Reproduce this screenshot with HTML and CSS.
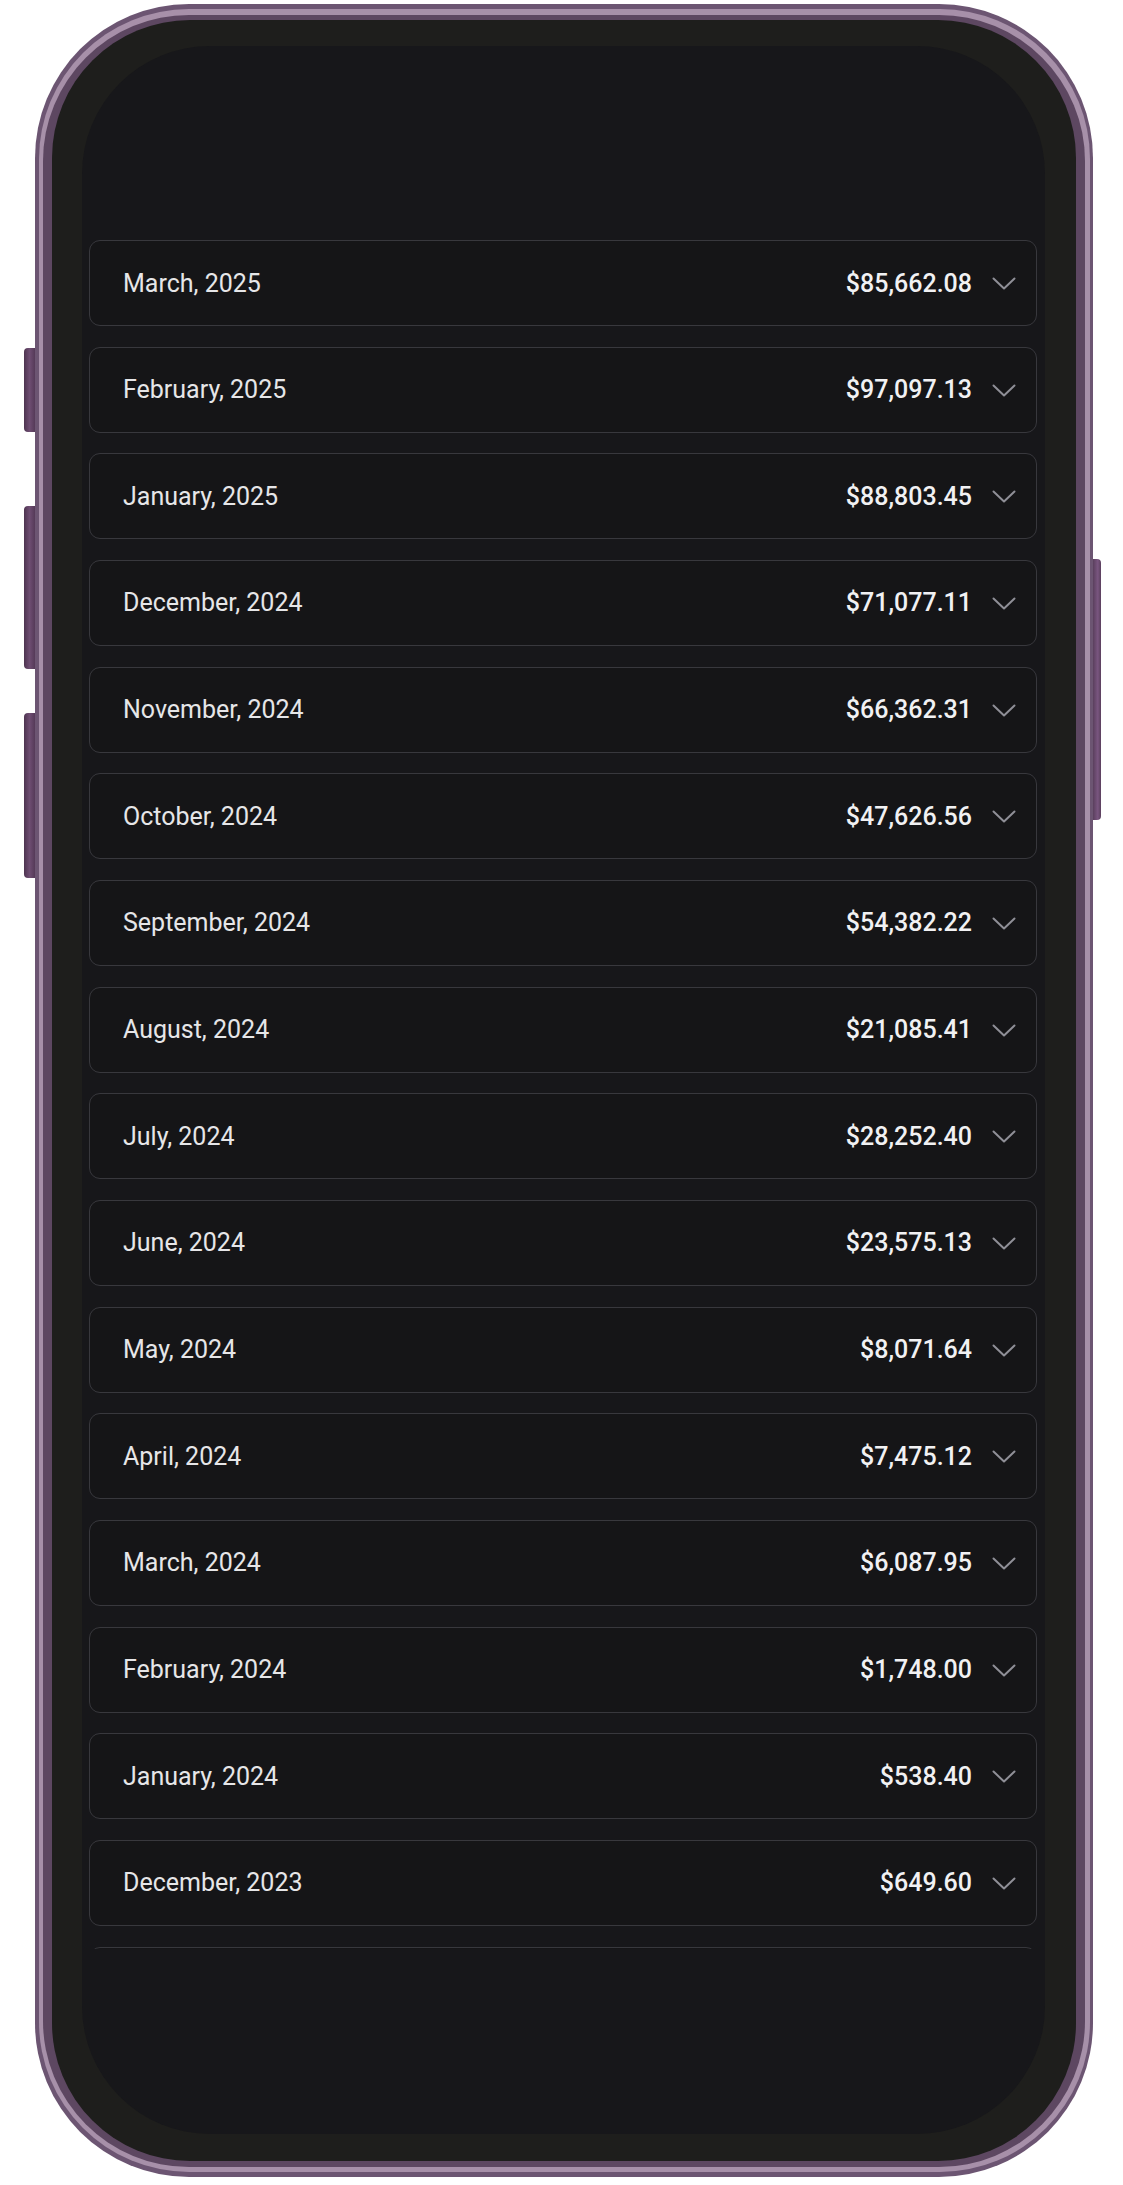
FILE: index.html
```html
<!DOCTYPE html>
<html lang="en">
<head>
<meta charset="utf-8">
<title>Monthly totals</title>
<link rel="stylesheet" href="styles.css">
</head>
<body>
<div class="phone">
  <div class="btn btn-l1"></div>
  <div class="btn btn-l2"></div>
  <div class="btn btn-l3"></div>
  <div class="btn btn-r1"></div>
  <div class="band-light">
    <div class="band-dark">
      <div class="bezel">
        <div class="screen">
          <div class="list">
            <div class="card"><span class="month">March, 2025</span><span class="amount">$85,662.08</span><svg class="chev" viewBox="0 0 24 13"><path d="M1.5 1.5 L12 11.5 L22.5 1.5"/></svg></div>
            <div class="card"><span class="month">February, 2025</span><span class="amount">$97,097.13</span><svg class="chev" viewBox="0 0 24 13"><path d="M1.5 1.5 L12 11.5 L22.5 1.5"/></svg></div>
            <div class="card"><span class="month">January, 2025</span><span class="amount">$88,803.45</span><svg class="chev" viewBox="0 0 24 13"><path d="M1.5 1.5 L12 11.5 L22.5 1.5"/></svg></div>
            <div class="card"><span class="month">December, 2024</span><span class="amount">$71,077.11</span><svg class="chev" viewBox="0 0 24 13"><path d="M1.5 1.5 L12 11.5 L22.5 1.5"/></svg></div>
            <div class="card"><span class="month">November, 2024</span><span class="amount">$66,362.31</span><svg class="chev" viewBox="0 0 24 13"><path d="M1.5 1.5 L12 11.5 L22.5 1.5"/></svg></div>
            <div class="card"><span class="month">October, 2024</span><span class="amount">$47,626.56</span><svg class="chev" viewBox="0 0 24 13"><path d="M1.5 1.5 L12 11.5 L22.5 1.5"/></svg></div>
            <div class="card"><span class="month">September, 2024</span><span class="amount">$54,382.22</span><svg class="chev" viewBox="0 0 24 13"><path d="M1.5 1.5 L12 11.5 L22.5 1.5"/></svg></div>
            <div class="card"><span class="month">August, 2024</span><span class="amount">$21,085.41</span><svg class="chev" viewBox="0 0 24 13"><path d="M1.5 1.5 L12 11.5 L22.5 1.5"/></svg></div>
            <div class="card"><span class="month">July, 2024</span><span class="amount">$28,252.40</span><svg class="chev" viewBox="0 0 24 13"><path d="M1.5 1.5 L12 11.5 L22.5 1.5"/></svg></div>
            <div class="card"><span class="month">June, 2024</span><span class="amount">$23,575.13</span><svg class="chev" viewBox="0 0 24 13"><path d="M1.5 1.5 L12 11.5 L22.5 1.5"/></svg></div>
            <div class="card"><span class="month">May, 2024</span><span class="amount">$8,071.64</span><svg class="chev" viewBox="0 0 24 13"><path d="M1.5 1.5 L12 11.5 L22.5 1.5"/></svg></div>
            <div class="card"><span class="month">April, 2024</span><span class="amount">$7,475.12</span><svg class="chev" viewBox="0 0 24 13"><path d="M1.5 1.5 L12 11.5 L22.5 1.5"/></svg></div>
            <div class="card"><span class="month">March, 2024</span><span class="amount">$6,087.95</span><svg class="chev" viewBox="0 0 24 13"><path d="M1.5 1.5 L12 11.5 L22.5 1.5"/></svg></div>
            <div class="card"><span class="month">February, 2024</span><span class="amount">$1,748.00</span><svg class="chev" viewBox="0 0 24 13"><path d="M1.5 1.5 L12 11.5 L22.5 1.5"/></svg></div>
            <div class="card"><span class="month">January, 2024</span><span class="amount">$538.40</span><svg class="chev" viewBox="0 0 24 13"><path d="M1.5 1.5 L12 11.5 L22.5 1.5"/></svg></div>
            <div class="card"><span class="month">December, 2023</span><span class="amount">$649.60</span><svg class="chev" viewBox="0 0 24 13"><path d="M1.5 1.5 L12 11.5 L22.5 1.5"/></svg></div>
            <div class="card card-peek"></div>
          </div>
        </div>
      </div>
    </div>
  </div>
</div>
</body>
</html>
```

FILE: styles.css
```css
html, body {
  margin: 0;
  padding: 0;
  background: #ffffff;
}

body {
  font-family: Roboto, "Liberation Sans", Arial, sans-serif;
}

.phone {
  position: relative;
  box-sizing: border-box;
  width: 1058px;
  height: 2173px;
  margin: 4px 0 0 35px;
  padding: 5px 3px 5px 4px;
  border-radius: 154px;
  background: #6c5572;
}

.btn {
  position: absolute;
  width: 11px;
  background: linear-gradient(90deg, #4e3450 0%, #6e4d72 50%, #553a58 100%);
  border-radius: 4px 0 0 4px;
}

.btn-l1 { left: -11px; top: 344px; height: 84px; }
.btn-l2 { left: -11px; top: 502px; height: 163px; }
.btn-l3 { left: -11px; top: 709px; height: 165px; }
.btn-r1 {
  right: -8px;
  width: 8px;
  top: 555px;
  height: 261px;
  border-radius: 0 4px 4px 0;
  background: linear-gradient(90deg, #5a3f5d 0%, #7a5680 60%, #5a3f5d 100%);
}

.band-light {
  box-sizing: border-box;
  height: 100%;
  padding: 6px 5px 5px 4px;
  border-radius: 150px;
  background: #a790a9;
}

.band-dark {
  box-sizing: border-box;
  height: 100%;
  padding: 5px 9px 6px 9px;
  border-radius: 146px;
  background: #5d4761;
}

.bezel {
  box-sizing: border-box;
  height: 100%;
  padding: 26px 31px 27px 30px;
  border-radius: 138px;
  background: #1e1e1c;
}

.screen {
  box-sizing: border-box;
  height: 100%;
  padding: 194px 8px 0 7px;
  border-radius: 128px;
  background: #17171a;
  overflow: hidden;
}

.list {
  height: 1709px;
  overflow: hidden;
  display: flex;
  flex-direction: column;
  gap: 20.67px;
}

.card {
  flex: none;
  box-sizing: border-box;
  height: 86px;
  display: flex;
  align-items: center;
  padding: 0 20px 0 33px;
  border: 1.5px solid #38383d;
  border-radius: 11px;
  background: #151517;
}

.month {
  flex: 1;
  font-size: 25px;
  font-weight: 400;
  color: #e6e6e8;
  letter-spacing: 0;
}

.amount {
  font-size: 25px;
  font-weight: 500;
  color: #f1f1f3;
  margin-right: 20px;
}

.chev {
  width: 24px;
  height: 13px;
  margin-top: 1px;
  fill: none;
  stroke: #8f8f97;
  stroke-width: 2;
  stroke-linecap: round;
  stroke-linejoin: round;
}
```
